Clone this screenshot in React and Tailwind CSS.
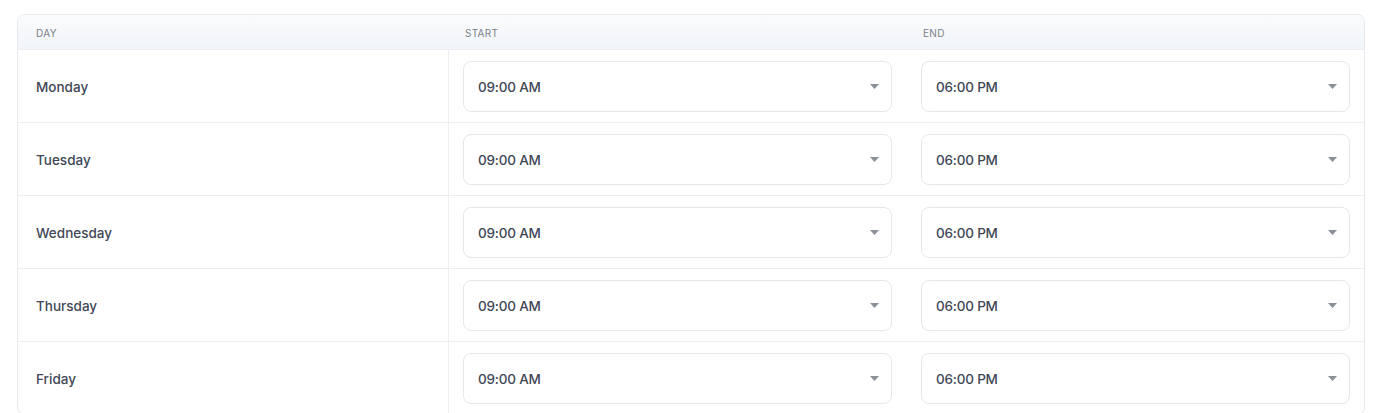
const days = ['Monday', 'Tuesday', 'Wednesday', 'Thursday', 'Friday'];

function Caret() {
  return (
    <svg width="9" height="5" viewBox="0 0 9 5" className="shrink-0">
      <path d="M0 0 H9 L4.5 5 Z" fill="#8a8f98" />
    </svg>
  );
}

function TimeSelect({ value }) {
  return (
    <div className="flex h-[51px] items-center justify-between rounded-lg border border-[#e5e7eb] bg-white pl-[14px] pr-[12px]">
      <span className="pt-[2px] text-[13.5px] font-medium tracking-[-0.2px] text-[#3f4756]">{value}</span>
      <Caret />
    </div>
  );
}

export default function App() {
  return (
    <div
      className="min-h-screen bg-white pl-[17px] pr-[10px] pt-[14px]"
      style={{ fontFamily: 'Inter, "Open Sans", sans-serif' }}
    >
      <div className="overflow-hidden rounded-lg border border-[#e6e9ee]">
        {/* Header */}
        <div className="grid h-[34px] grid-cols-[431px_458px_1fr] items-center bg-gradient-to-b from-[#fafbfc] to-[#f1f5f9] pt-[2px] text-[10px] uppercase tracking-[0.3px] text-[#7a808a]">
          <div className="pl-[18px]">Day</div>
          <div className="pl-[16px]">Start</div>
          <div className="pl-[16px]">End</div>
        </div>

        {/* Rows */}
        {days.map((day) => (
          <div
            key={day}
            className="grid h-[73px] grid-cols-[431px_458px_1fr] border-t border-[#eceef2]"
          >
            <div className="flex items-center border-r border-[#eceef2] pl-[18px] pt-[2px] text-[13.5px] font-medium text-[#3f4756]">
              {day}
            </div>
            <div className="flex flex-col justify-center pl-[14px] pr-[15px]">
              <TimeSelect value="09:00 AM" />
            </div>
            <div className="flex flex-col justify-center px-[14px]">
              <TimeSelect value="06:00 PM" />
            </div>
          </div>
        ))}
      </div>
    </div>
  );
}
